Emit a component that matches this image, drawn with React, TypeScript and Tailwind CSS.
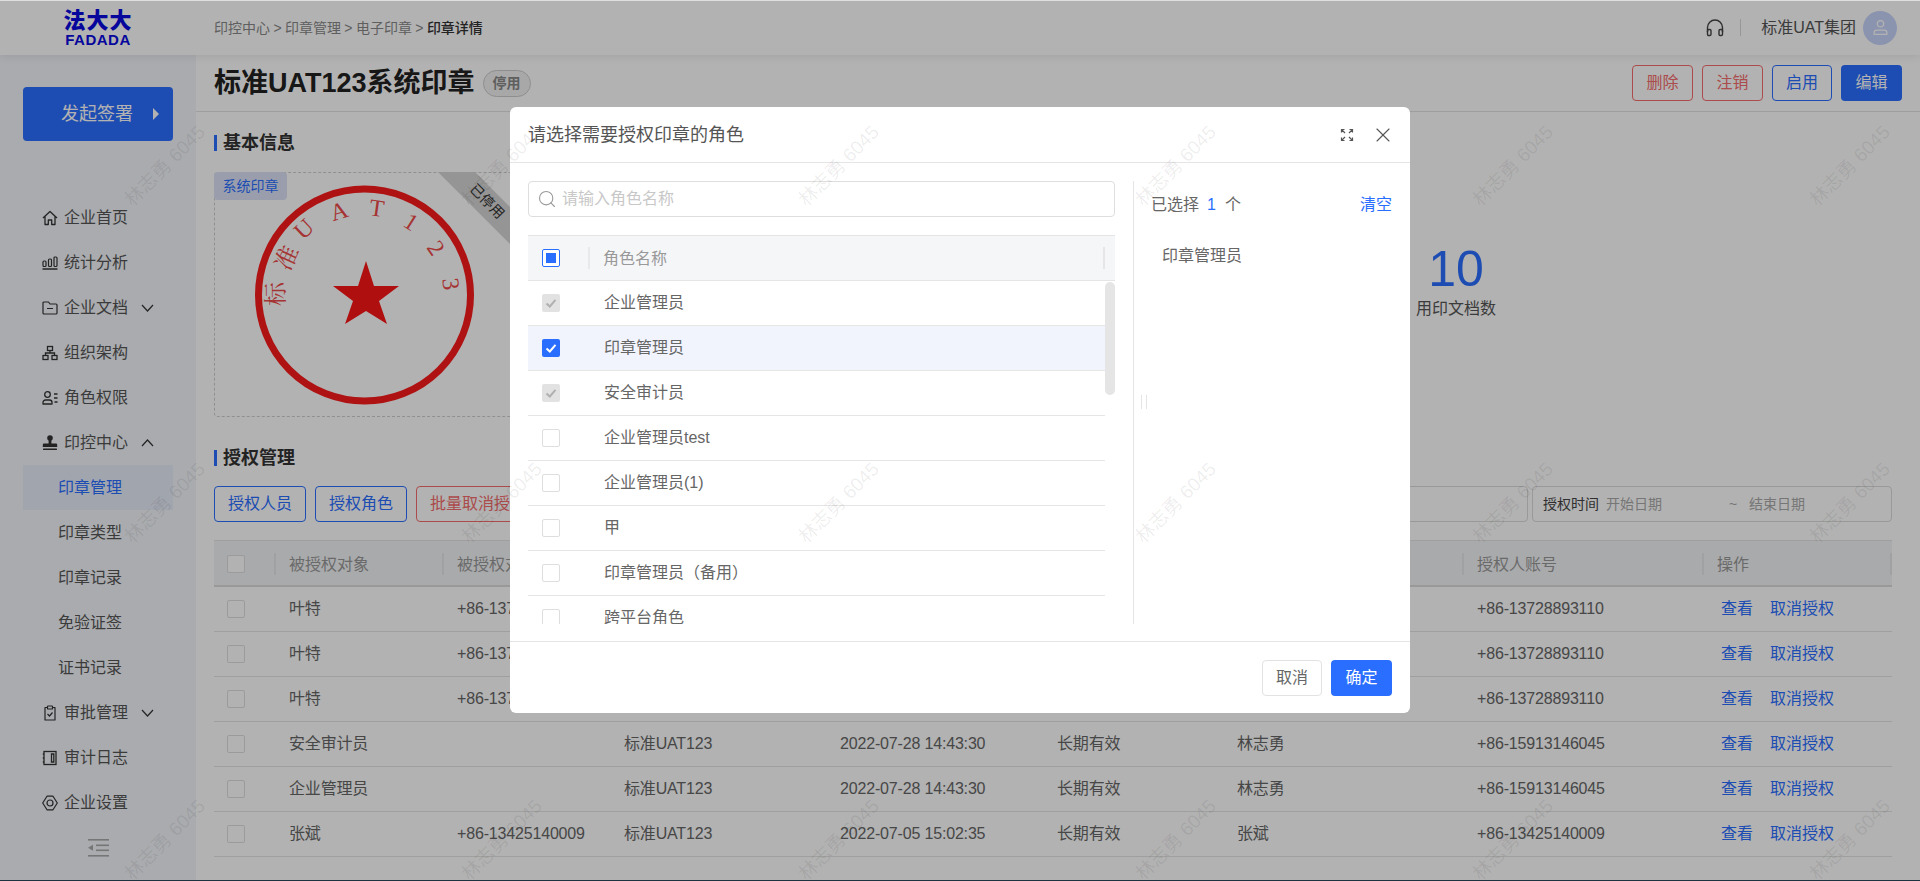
import { Search, X } from "lucide-react";

const iconCls = "w-4 h-4 shrink-0 text-[#333]";

const HomeIcon = () => (
  <svg viewBox="0 0 16 16" className={iconCls} fill="none" stroke="currentColor" strokeWidth="1.3">
    <path d="M1 8 L8 1.5 L15 8 M3 6.5 V14.5 H6.3 V10 H9.7 V14.5 H13 V6.5" strokeLinejoin="round" />
  </svg>
);
const ChartIcon = () => (
  <svg viewBox="0 0 16 16" className={iconCls} fill="none" stroke="currentColor" strokeWidth="1.2">
    <rect x="1" y="6" width="3" height="5.5" rx="1" />
    <rect x="6.5" y="4" width="3" height="7.5" rx="1" />
    <rect x="12" y="2" width="3" height="9.5" rx="1" />
    <path d="M0.5 14 H15.5" strokeWidth="1.5" />
  </svg>
);
const FolderIcon = () => (
  <svg viewBox="0 0 16 16" className={iconCls} fill="none" stroke="currentColor" strokeWidth="1.2">
    <path d="M1 3 a1 1 0 0 1 1-1 H6.5 L8 4 H14 a1 1 0 0 1 1 1 V13 a1 1 0 0 1-1 1 H2 a1 1 0 0 1-1-1 Z M5 8.5 H11" strokeLinejoin="round" />
  </svg>
);
const OrgIcon = () => (
  <svg viewBox="0 0 16 16" className={iconCls} fill="none" stroke="currentColor" strokeWidth="1.3">
    <rect x="5.5" y="1.5" width="5" height="4" />
    <rect x="1" y="10.5" width="5" height="4" />
    <rect x="10" y="10.5" width="5" height="4" />
    <path d="M8 5.5 V8 M3.5 10.5 V8 H12.5 V10.5" />
  </svg>
);
const RoleIcon = () => (
  <svg viewBox="0 0 16 16" className={iconCls} fill="none" stroke="currentColor" strokeWidth="1.3">
    <circle cx="5.5" cy="4.5" r="2.8" />
    <path d="M1 14 V12.5 a2.5 2.5 0 0 1 2.5-2.5 H7.5 a2.5 2.5 0 0 1 2.5 2.5 V14 Z" strokeLinejoin="round" />
    <path d="M12 4 H15.5 M12 8 H15.5 M12.5 12 H15.5" />
  </svg>
);
const StampIcon = () => (
  <svg viewBox="0 0 16 16" className={iconCls} fill="currentColor">
    <circle cx="8" cy="3" r="2.8" />
    <path d="M6.6 5 H9.4 V8.5 H14 a1.2 1.2 0 0 1 1.2 1.2 V12 H0.8 V9.7 a1.2 1.2 0 0 1 1.2-1.2 H6.6 Z" />
    <rect x="1" y="13.5" width="14" height="1.6" rx="0.6" />
  </svg>
);
const ClipboardIcon = () => (
  <svg viewBox="0 0 16 16" className={iconCls} fill="none" stroke="currentColor" strokeWidth="1.2">
    <path d="M5.5 2.5 H3 V15 H13 V2.5 H10.5" strokeLinejoin="round" />
    <rect x="5.5" y="1" width="5" height="3" rx="0.6" />
    <path d="M5.5 9 L7.5 11 L10.5 7.5" />
  </svg>
);
const LogIcon = () => (
  <svg viewBox="0 0 16 16" className={iconCls} fill="none" stroke="currentColor" strokeWidth="1.3">
    <rect x="2" y="1.5" width="12" height="13" />
    <path d="M9.5 4 H11.8 V12 H9.5 Z M0.8 4 H2 M0.8 8 H2 M0.8 12 H2" />
  </svg>
);
const GearIcon = () => (
  <svg viewBox="0 0 16 16" className={iconCls} fill="none" stroke="currentColor" strokeWidth="1.2">
    <path d="M5 1.2 H11 L15.3 8 L11 14.8 H5 L0.7 8 Z" strokeLinejoin="round" />
    <circle cx="8" cy="8" r="3" />
  </svg>
);
const Chevron = ({ up }: { up?: boolean }) => (
  <svg viewBox="0 0 13 8" className="w-[13px] h-2 ml-[7px] text-[#333]" fill="none" stroke="currentColor" strokeWidth="1.2">
    <path d={up ? "M1 7 L6.5 1 L12 7" : "M1 1 L6.5 7 L12 1"} />
  </svg>
);

const menu = [
  { label: "企业首页", icon: <HomeIcon /> },
  { label: "统计分析", icon: <ChartIcon /> },
  { label: "企业文档", icon: <FolderIcon />, arrow: "down" },
  { label: "组织架构", icon: <OrgIcon /> },
  { label: "角色权限", icon: <RoleIcon /> },
  { label: "印控中心", icon: <StampIcon />, arrow: "up" },
  { label: "印章管理", sub: true, active: true },
  { label: "印章类型", sub: true },
  { label: "印章记录", sub: true },
  { label: "免验证签", sub: true },
  { label: "证书记录", sub: true },
  { label: "审批管理", icon: <ClipboardIcon />, arrow: "down" },
  { label: "审计日志", icon: <LogIcon /> },
  { label: "企业设置", icon: <GearIcon /> },
];

const Sidebar = () => (
  <div className="w-[196px] shrink-0 bg-[#f3f5fa] flex flex-col">
    <div className="mt-8 ml-[23px] w-[150px] h-[54px] rounded bg-[#2a6eff] text-white text-lg flex items-center pl-[38px]">
      <span>发起签署</span>
      <span className="ml-5 w-0 h-0 border-y-[6px] border-y-transparent border-l-[6px] border-l-white" />
    </div>
    <div className="mt-[54px] flex flex-col">
      {menu.map((m) => (
        <div
          key={m.label}
          className={
            m.sub
              ? m.active
                ? "h-[45px] ml-[23px] w-[150px] pl-[35px] flex items-center bg-[#e7edf9] text-[#2a6eff]"
                : "h-[45px] ml-[23px] w-[150px] pl-[35px] flex items-center text-[#555]"
              : "h-[45px] pl-[42px] flex items-center gap-[6px] text-[#555]"
          }
        >
          {m.icon}
          <span>{m.label}</span>
          {m.arrow && <Chevron up={m.arrow === "up"} />}
        </div>
      ))}
    </div>
    <div className="mt-[14px] flex justify-center">
      <svg viewBox="0 0 21 18" className="w-[21px] h-[18px] text-[#aaa]" fill="currentColor">
        <rect x="0" y="0" width="21" height="1.6" />
        <rect x="8" y="5.5" width="13" height="1.6" />
        <rect x="8" y="10.5" width="13" height="1.6" />
        <rect x="0" y="16" width="21" height="1.6" />
        <path d="M0 8.8 L5 5.8 V11.8 Z" />
      </svg>
    </div>
  </div>
);

const Check = ({ state }: { state?: "on" | "off" | "some" | "locked" }) => {
  if (state === "some")
    return (
      <span className="w-[18px] h-[18px] rounded-[2px] border border-[#2a6eff] bg-white flex items-center justify-center">
        <span className="w-[10px] h-[10px] bg-[#2a6eff]" />
      </span>
    );
  if (state === "on" || state === "locked")
    return (
      <span
        className={
          state === "on"
            ? "w-[18px] h-[18px] rounded-[2px] bg-[#2a6eff] text-white flex items-center justify-center"
            : "w-[18px] h-[18px] rounded-[2px] bg-[#e2e2e2] text-[#b0b0b0] flex items-center justify-center"
        }
      >
        <svg viewBox="0 0 12 12" className="w-3 h-3" fill="none" stroke="currentColor" strokeWidth="2">
          <path d="M1.5 6.5 L4.8 9.5 L10.5 2.8" />
        </svg>
      </span>
    );
  return <span className="w-[18px] h-[18px] rounded-[2px] border border-[#dedede] bg-white" />;
};

const Btn = ({ text, kind }: { text: string; kind: "blue" | "red" | "fill" }) => (
  <button
    className={
      kind === "fill"
        ? "h-9 w-[61px] rounded bg-[#2a6eff] text-white"
        : kind === "blue"
          ? "h-9 w-[60px] rounded border border-[#2a6eff] text-[#2a6eff]"
          : "h-9 w-[61px] rounded border border-[#f56c6c] text-[#f56c6c]"
    }
  >
    {text}
  </button>
);

const SectionTitle = ({ text }: { text: string }) => (
  <div className="h-6 flex items-center">
    <span className="w-[3px] h-4 bg-[#2a6eff]" />
    <span className="ml-[6px] text-lg font-bold text-[#333]">{text}</span>
  </div>
);

const seal = [
  { t: "标", x: 276, y: 293, r: -90 },
  { t: "准", x: 287, y: 257, r: -65 },
  { t: "U", x: 304, y: 228, r: -43 },
  { t: "A", x: 339, y: 210, r: -17 },
  { t: "T", x: 377, y: 207, r: 8 },
  { t: "1", x: 411, y: 221, r: 32 },
  { t: "2", x: 436, y: 247, r: 56 },
  { t: "3", x: 451, y: 283, r: 83 },
];

const Seal = () => (
  <svg viewBox="254 184 220 220" className="w-[220px] h-[220px]">
    <circle cx="364.5" cy="294" r="106" fill="none" stroke="#fb1a1a" strokeWidth="7" />
    <polygon points="366,260 374,285 399,285 379,300 387,323 366,310 345,323 353,300 333,285 358,285" fill="#fc1616" />
    {seal.map((s) => (
      <text
        key={s.t}
        x={s.x}
        y={s.y}
        fontSize="24"
        fill="#ee4a4a"
        textAnchor="middle"
        dominantBaseline="central"
        transform={`rotate(${s.r} ${s.x} ${s.y})`}
        fontFamily="'Liberation Serif','Noto Serif CJK SC','Noto Sans CJK SC',serif"
      >
        {s.t}
      </text>
    ))}
  </svg>
);

const columns = ["被授权对象", "被授权对象账号", "所属企业", "授权时间", "有效期", "授权人", "授权人账号"];

const rows = [
  ["叶特", "+86-13728893110", "标准UAT123", "2022-07-29 10:12:45", "长期有效", "叶特", "+86-13728893110"],
  ["叶特", "+86-13728893110", "标准UAT123", "2022-07-29 10:12:45", "长期有效", "叶特", "+86-13728893110"],
  ["叶特", "+86-13728893110", "标准UAT123", "2022-07-29 10:12:45", "长期有效", "叶特", "+86-13728893110"],
  ["安全审计员", "", "标准UAT123", "2022-07-28 14:43:30", "长期有效", "林志勇", "+86-15913146045"],
  ["企业管理员", "", "标准UAT123", "2022-07-28 14:43:30", "长期有效", "林志勇", "+86-15913146045"],
  ["张斌", "+86-13425140009", "标准UAT123", "2022-07-05 15:02:35", "长期有效", "张斌", "+86-13425140009"],
];

const AuthTable = () => (
  <div className="mt-[18px] text-[#666]">
    <div className="h-[47px] pt-px grid grid-cols-[60px_168px_167px_216px_217px_180px_240px_240px_190px] items-center bg-[#f3f4f6] border-t border-b-2 border-t-[#e4e4e4] border-b-[#dcdcdc]">
      <div className="pl-[13px] flex">
        <Check />
      </div>
      {columns.map((c) => (
        <div key={c} className="h-[22px] border-l-2 border-[#e6e7ea] pl-[13px] leading-[24px] text-[#999] whitespace-nowrap overflow-hidden">
          {c}
        </div>
      ))}
      <div className="h-[22px] border-l-2 border-[#e6e7ea] pl-[13px] leading-[24px] text-[#999] flex justify-between">
        <span>操作</span>
        <span className="w-[2px] bg-[#e6e7ea]" />
      </div>
    </div>
    {rows.map((r, i) => (
      <div key={i} className="h-[45px] grid grid-cols-[60px_168px_167px_216px_217px_180px_240px_240px_190px] items-center border-b border-[#e4e4e4]">
        <div className="pl-[13px] flex">
          <Check />
        </div>
        {r.map((v, j) => (
          <div key={j} className="pl-[15px] whitespace-nowrap tracking-[-0.17px]">
            {v}
          </div>
        ))}
        <div className="pl-[19px] flex gap-[17px] text-[#2a6eff] whitespace-nowrap">
          <span>查看</span>
          <span>取消授权</span>
        </div>
      </div>
    ))}
  </div>
);

const Content = () => (
  <div className="flex-1 min-w-0 bg-white flex flex-col">
    <div className="h-[57px] shrink-0 flex items-center justify-between pl-[18px] pr-[18px] border-b border-[#e2e2e2]">
      <div className="flex items-center">
        <span className="text-[27px] font-bold text-[#222] whitespace-nowrap">标准UAT123系统印章</span>
        <span className="ml-2 w-12 h-[27px] rounded-full border border-[#cccccc] bg-[#f1f1f1] text-[#888] text-sm font-bold flex items-center justify-center">
          停用
        </span>
      </div>
      <div className="flex gap-[9px]">
        <Btn text="删除" kind="red" />
        <Btn text="注销" kind="red" />
        <Btn text="启用" kind="blue" />
        <Btn text="编辑" kind="fill" />
      </div>
    </div>
    <div className="pl-[18px] pr-[28px] pt-[19px] flex flex-col">
      <SectionTitle text="基本信息" />
      <div className="mt-[17px] flex">
        <div className="relative w-[300px] h-[245px] rounded border border-dashed border-[#cfcfcf] flex items-center justify-center">
          <span className="absolute -left-px -top-px w-[73px] h-7 rounded-[4px] bg-[#dde3f6] text-[#2a6eff] text-sm flex items-center justify-center">
            系统印章
          </span>
          <div className="absolute -right-px -top-px w-[76px] h-[76px] bg-[#d6d6d6] [clip-path:polygon(0_0,37px_0,100%_39px,100%_100%)]">
            <span className="absolute left-[28px] top-[19px] w-[42px] leading-[21px] text-sm text-[#333] rotate-45 whitespace-nowrap">
              已停用
            </span>
          </div>
          <Seal />
        </div>
        <div className="ml-auto mr-[396px] mt-[72px] flex flex-col items-center">
          <span className="text-[50px] leading-[50px] text-[#2a6eff]">10</span>
          <span className="mt-[3px] text-[#555] whitespace-nowrap">用印文档数</span>
        </div>
      </div>
      <div className="mt-[29px]">
        <SectionTitle text="授权管理" />
      </div>
      <div className="mt-4 flex items-center">
        <button className="w-[92px] h-9 rounded border border-[#2a6eff] text-[#2a6eff]">授权人员</button>
        <button className="ml-[9px] w-[92px] h-9 rounded border border-[#2a6eff] text-[#2a6eff]">授权角色</button>
        <button className="ml-[9px] w-[124px] h-9 rounded border border-[#f56c6c] text-[#f56c6c]">批量取消授权</button>
        <div className="ml-auto w-[230px] h-9 rounded border border-[#dcdcdc]" />
        <div className="ml-1 w-[360px] h-9 rounded border border-[#dcdcdc] flex items-center pl-[10px] text-sm text-[#aaa]">
          <span className="w-[63px] text-[#444]">授权时间</span>
          <span className="w-[123px]">开始日期</span>
          <span className="w-5">~</span>
          <span>结束日期</span>
        </div>
      </div>
      <AuthTable />
    </div>
  </div>
);

const roles: { name: string; state?: "on" | "locked"; active?: boolean }[] = [
  { name: "企业管理员", state: "locked" },
  { name: "印章管理员", state: "on", active: true },
  { name: "安全审计员", state: "locked" },
  { name: "企业管理员test" },
  { name: "企业管理员(1)" },
  { name: "甲" },
  { name: "印章管理员（备用）" },
  { name: "跨平台角色" },
];

const Modal = () => (
  <div className="absolute left-[510px] top-[107px] w-[900px] h-[606px] rounded-md bg-white flex flex-col text-[#666]">
    <div className="h-[56px] shrink-0 border-b border-[#e5e5e5] flex items-center justify-between pl-[18px] pr-[15px]">
      <span className="text-lg text-[#555]">请选择需要授权印章的角色</span>
      <div className="flex items-center gap-[17px] text-[#555]">
        <svg viewBox="0 0 14 14" className="w-[14px] h-[14px]" fill="none" stroke="currentColor" strokeWidth="1.2">
          <path d="M1.5 4.5 V1.5 H4.5 M1.5 1.5 L5 5 M9.5 1.5 H12.5 V4.5 M12.5 1.5 L9 5 M1.5 9.5 V12.5 H4.5 M1.5 12.5 L5 9 M9.5 12.5 H12.5 V9.5 M12.5 12.5 L9 9" />
        </svg>
        <X className="w-6 h-6" strokeWidth={1.1} />
      </div>
    </div>
    <div className="flex-1 min-h-0 flex pt-[18px] pb-[17px] pl-[18px]">
      <div className="w-[587px] shrink-0 flex flex-col">
        <div className="h-9 shrink-0 rounded border border-[#dedede] flex items-center pl-[8px] gap-[5px] text-[#c8c8c8]">
          <Search className="w-5 h-5 text-[#999]" strokeWidth={1.3} />
          <span>请输入角色名称</span>
        </div>
        <div className="mt-[18px] h-[46px] shrink-0 bg-[#f5f6f8] border-y border-[#e5e5e5] flex items-center">
          <div className="w-[60px] pl-[14px] flex">
            <Check state="some" />
          </div>
          <div className="flex-1 h-[22px] border-l-2 border-[#e9e9ec] pl-[13px] leading-[24px] text-[#999]">角色名称</div>
          <div className="w-[2px] h-[22px] bg-[#e6e6e9] mr-[10px]" />
        </div>
        <div className="flex-1 min-h-0 flex overflow-hidden">
          <div className="w-[577px] shrink-0">
            {roles.map((r) => (
              <div
                key={r.name}
                className={
                  r.active
                    ? "h-[45px] flex items-center border-b border-[#e5e5e5] bg-[#f1f4fd]"
                    : "h-[45px] flex items-center border-b border-[#e5e5e5]"
                }
              >
                <div className="w-[76px] pl-[14px] flex">
                  <Check state={r.state} />
                </div>
                <span>{r.name}</span>
              </div>
            ))}
          </div>
          <div className="w-[10px] pt-px">
            <div className="h-[113px] rounded-full bg-[#e5e5e5]" />
          </div>
        </div>
      </div>
      <div className="relative ml-[18px] flex-1 border-l border-[#e5e5e5] pl-[17px] pr-[18px]">
        <div className="mt-[13px] h-[22px] flex items-center">
          <span>已选择</span>
          <span className="ml-2 text-[#2a6eff]">1</span>
          <span className="ml-[9px]">个</span>
          <span className="ml-auto text-[#2a6eff]">清空</span>
        </div>
        <div className="mt-[28px] ml-[11px]">印章管理员</div>
        <div className="absolute left-[7px] top-[214px] w-[6px] h-[14px] border-x border-[#e5e5e5]" />
      </div>
    </div>
    <div className="h-[72px] shrink-0 border-t border-[#e5e5e5] flex items-center justify-end gap-[9px] pr-[18px]">
      <button className="w-[60px] h-9 rounded border border-[#e2e2e2] text-[#666]">取消</button>
      <button className="w-[61px] h-9 rounded bg-[#2a6eff] text-white">确定</button>
    </div>
  </div>
);

const Watermarks = () => (
  <div className="absolute left-[-3px] top-[-2px] grid grid-cols-[repeat(6,337px)] grid-rows-[repeat(3,337px)] pointer-events-none">
    {Array.from({ length: 18 }).map((_, i) => (
      <div key={i} className="flex items-center justify-center">
        <span className="text-[19px] text-black/[0.08] -rotate-45 whitespace-nowrap">林志勇 6045</span>
      </div>
    ))}
  </div>
);

export default function App() {
  return (
    <div className="relative w-[1920px] h-[881px] overflow-hidden bg-white text-base font-['Liberation_Sans','Noto_Sans_CJK_SC',sans-serif]">
      <div className="relative h-[55px] bg-white shadow-[0_2px_8px_rgba(0,0,0,0.08)] flex items-center">
        <div className="w-[196px] flex flex-col items-center text-[#0a0ae0] font-bold leading-none">
          <span className="text-[22px] leading-[21px] tracking-[1px] font-black">法大大</span>
          <span className="mt-[2px] text-[15px] leading-[13px] tracking-[0.5px] font-black">FADADA</span>
        </div>
        <div className="ml-[18px] text-sm text-[#888] [word-spacing:-0.5px]">
          印控中心 &gt; 印章管理 &gt; 电子印章 &gt; <span className="text-[#333] font-medium">印章详情</span>
        </div>
        <div className="ml-auto flex items-center pr-[23px]">
          <svg viewBox="0 0 18 18" className="w-[18px] h-[18px] text-[#444]" fill="none" stroke="currentColor" strokeWidth="1.4">
            <path d="M1.5 13 V8.5 a7.5 7.5 0 0 1 15 0 V13" />
            <rect x="1.5" y="10.5" width="3.5" height="6" rx="1.2" />
            <rect x="13" y="10.5" width="3.5" height="6" rx="1.2" />
          </svg>
          <span className="ml-4 w-px h-[17px] bg-[#d8d8d8]" />
          <span className="ml-5 text-[#555]">标准UAT集团</span>
          <span className="ml-[7px] w-[34px] h-[34px] rounded-full bg-[#c8d4fb] flex items-center justify-center text-white">
            <svg viewBox="0 0 16 16" className="w-[17px] h-[17px]" fill="none" stroke="currentColor" strokeWidth="1.2">
              <circle cx="8" cy="4.5" r="3" />
              <path d="M2 14.5 V13 a2.5 2.5 0 0 1 2.5-2.5 H11.5 a2.5 2.5 0 0 1 2.5 2.5 V14.5 Z" strokeLinejoin="round" />
            </svg>
          </span>
        </div>
      </div>
      <div className="flex h-[826px]">
        <Sidebar />
        <Content />
      </div>
      <div className="absolute inset-0 bg-black/30" />
      <Modal />
      <Watermarks />
      <div className="absolute left-0 top-0 w-full h-px bg-[#dedede]" />
      <div className="absolute left-0 bottom-0 w-full h-px bg-[#1c3442]" />
    </div>
  );
}
